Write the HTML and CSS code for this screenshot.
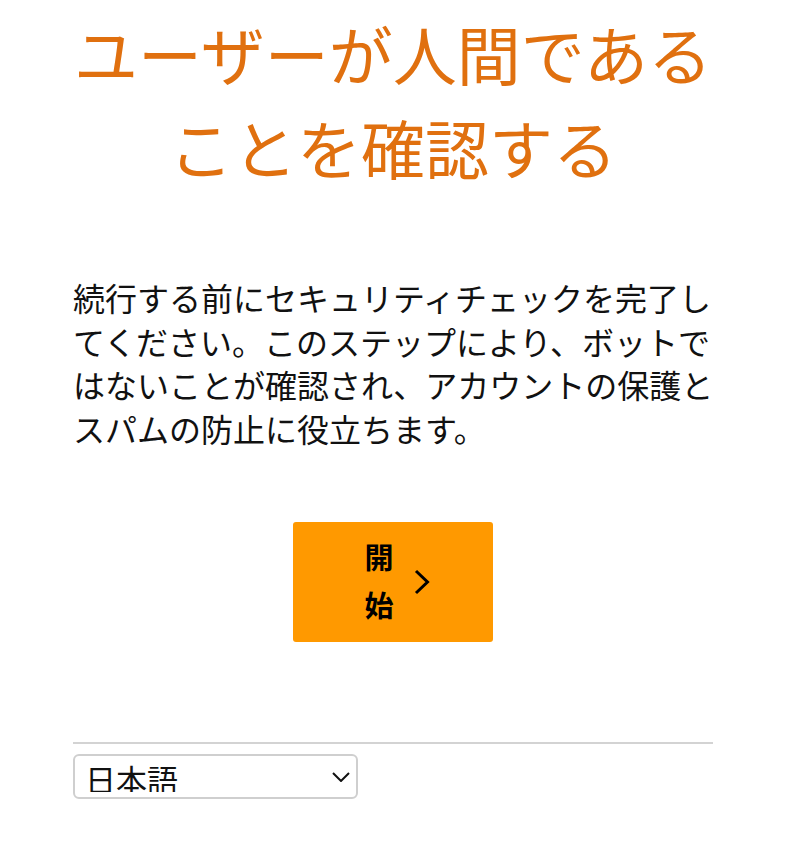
FILE: index.html
```html
<!DOCTYPE html>
<html lang="ja">
<head>
<meta charset="utf-8">
<link rel="stylesheet" href="styles.css">
</head>
<body>
<main class="page">
  <h1 class="title">ユーザーが人間であることを確認する</h1>
  <p class="lead">続行する前にセキュリティチェックを完了してください。このステップにより、ボットではないことが確認され、アカウントの保護とスパムの防止に役立ちます。</p>
  <div class="actions">
    <button class="start" type="button">
      <span class="start-label">開始</span>
      <svg class="chev" width="16" height="26" viewBox="0 0 16 26" aria-hidden="true"><polyline points="2,2 13.5,13 2,24" fill="none" stroke="#000" stroke-width="3"/></svg>
    </button>
  </div>
  <hr class="divider">
  <div class="lang">
    <select class="lang-select"><option>日本語</option></select>
    <svg class="lang-chev" width="18" height="10" viewBox="0 0 18 10" aria-hidden="true"><polyline points="1,1 9,9 17,1" fill="none" stroke="#111" stroke-width="2"/></svg>
  </div>
</main>
</body>
</html>
```
FILE: styles.css
```css
html, body {
  margin: 0;
  padding: 0;
  background: #fff;
}
body {
  font-family: "Noto Sans CJK JP", "Noto Sans", sans-serif;
  color: #111;
}
.page {
  width: 640px;
  padding: 0 0 40px 73px;
}
.title {
  margin: 0 -4px;
  padding-top: 5px;
  font-size: 64px;
  font-weight: 400;
  line-height: 94px;
  color: #e0700f;
  text-align: center;
}
.lead {
  margin: 83px -2px 0 0;
  font-size: 32px;
  line-height: 43.7px;
  color: #111;
}
.actions {
  display: flex;
  justify-content: center;
  margin-top: 71px;
}
.start {
  width: 200px;
  height: 120px;
  border: 0;
  border-radius: 3px;
  background: #ff9900;
  display: flex;
  align-items: center;
  justify-content: center;
  gap: 20px;
  padding: 0 0 4px 8px;
  font-family: "Noto Sans CJK JP", sans-serif;
  cursor: pointer;
}
.start-label {
  width: 1em;
  font-size: 29px;
  font-weight: 700;
  line-height: 48px;
  color: #000;
  word-break: break-all;
}
.chev {
  display: block;
  margin-top: 4px;
}
.divider {
  margin: 100px 0 0;
  border: 0;
  border-top: 2px solid #d3d3d3;
  height: 0;
}
.lang {
  position: relative;
  width: 285px;
  margin-top: 10px;
}
.lang-select {
  appearance: none;
  -webkit-appearance: none;
  box-sizing: border-box;
  width: 285px;
  height: 45px;
  border: 2px solid #cfcfcf;
  border-radius: 6px;
  background: #fff;
  padding: 0 10px 5px;
  font-family: "Noto Sans CJK JP", sans-serif;
  font-size: 31px;
  color: #111;
}
.lang-chev {
  position: absolute;
  right: 8px;
  top: 18px;
  pointer-events: none;
}
```
